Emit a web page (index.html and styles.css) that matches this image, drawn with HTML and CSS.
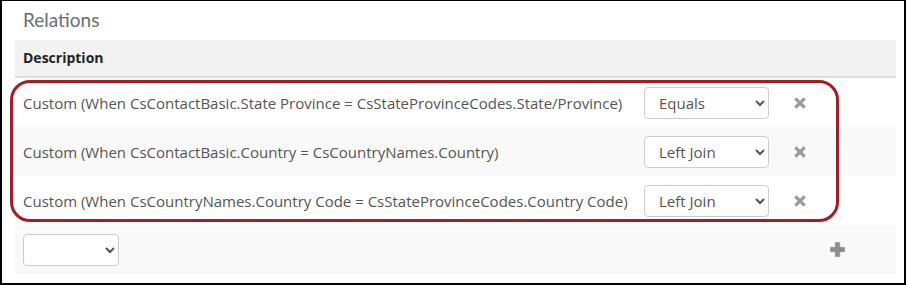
FILE: index.html
```html
<!DOCTYPE html>
<html>
<head>
<meta charset="utf-8">
<link rel="stylesheet" href="styles.css">
</head>
<body>
<div class="panel">
  <h2 class="title">Relations</h2>
  <div class="table">
    <div class="thead">Description</div>
    <div class="group">
      <div class="row">
        <div class="desc">Custom (When CsContactBasic.State Province = CsStateProvinceCodes.State/Province)</div>
        <select class="sel"><option>Equals</option></select>
        <svg class="del" viewBox="0 0 14 14" width="14" height="14"><path d="M1.2 3.4 L3.4 1.2 L7 4.8 L10.6 1.2 L12.8 3.4 L9.2 7 L12.8 10.6 L10.6 12.8 L7 9.2 L3.4 12.8 L1.2 10.6 L4.8 7 Z" fill="#9a9a9a"/></svg>
      </div>
      <div class="row alt">
        <div class="desc">Custom (When CsContactBasic.Country = CsCountryNames.Country)</div>
        <select class="sel"><option>Left Join</option></select>
        <svg class="del" viewBox="0 0 14 14" width="14" height="14"><path d="M1.2 3.4 L3.4 1.2 L7 4.8 L10.6 1.2 L12.8 3.4 L9.2 7 L12.8 10.6 L10.6 12.8 L7 9.2 L3.4 12.8 L1.2 10.6 L4.8 7 Z" fill="#9a9a9a"/></svg>
      </div>
      <div class="row">
        <div class="desc">Custom (When CsCountryNames.Country Code = CsStateProvinceCodes.Country Code)</div>
        <select class="sel"><option>Left Join</option></select>
        <svg class="del" viewBox="0 0 14 14" width="14" height="14"><path d="M1.2 3.4 L3.4 1.2 L7 4.8 L10.6 1.2 L12.8 3.4 L9.2 7 L12.8 10.6 L10.6 12.8 L7 9.2 L3.4 12.8 L1.2 10.6 L4.8 7 Z" fill="#9a9a9a"/></svg>
      </div>
    </div>
    <div class="row alt addrow">
      <select class="sel small"><option></option></select>
      <svg class="add" viewBox="0 0 15 15" width="15" height="15"><path d="M5.3 0.5 H9.7 V5.3 H14.5 V9.7 H9.7 V14.5 H5.3 V9.7 H0.5 V5.3 H5.3 Z" fill="#8c8c8c" stroke="#8c8c8c" stroke-width="0.6" stroke-linejoin="round"/></svg>
    </div>
  </div>
</div>
</body>
</html>
```

FILE: styles.css
```css
html, body {
  margin: 0;
  padding: 0;
  background: #fff;
}
body {
  width: 906px;
  height: 285px;
  box-sizing: border-box;
  border-style: solid;
  border-color: #000;
  border-width: 1px 2px 2px 2px;
  font-family: "Open Sans", "Liberation Sans", sans-serif;
  font-size: 15px;
  color: #555;
}
.panel {
  padding: 0 8px 0 13px;
}
.title {
  margin: 0;
  height: 39px;
  box-sizing: border-box;
  padding: 7px 0 0 8px;
  font-family: Lato, "Open Sans", sans-serif;
  font-weight: 400;
  font-size: 19px;
  line-height: 24px;
  color: #6b6e72;
}
.table {
  width: 881px;
}
.thead {
  background: #f2f2f2;
  border-bottom: 2px solid #ddd;
  padding: 8px;
  line-height: 20px;
  font-size: 14px;
  font-weight: 700;
  color: #222;
}
.group {
  position: relative;
}
.group::after {
  content: "";
  position: absolute;
  left: -5px;
  top: 2px;
  width: 829px;
  height: 142px;
  box-sizing: border-box;
  border: 3px solid #a51c24;
  border-radius: 20px;
  pointer-events: none;
}
.row {
  display: flex;
  align-items: center;
  height: 49px;
  box-sizing: border-box;
  padding: 0 8px;
}
.alt {
  background: #f9f9f9;
}
.desc {
  flex: 0 0 621px;
  line-height: 20px;
  white-space: nowrap;
}
.sel {
  width: 125px;
  height: 32px;
  box-sizing: border-box;
  border: 1px solid #ccc;
  border-radius: 4px;
  background: #fff;
  padding: 0 8px 0 10px;
  font-family: "Open Sans", "Liberation Sans", sans-serif;
  font-size: 15px;
  color: #555;
}
.sel.small {
  width: 96px;
}
.del {
  margin-left: 24px;
  flex: none;
}
.addrow {
  justify-content: space-between;
  padding-right: 51px;
}
.add {
  flex: none;
}
```
